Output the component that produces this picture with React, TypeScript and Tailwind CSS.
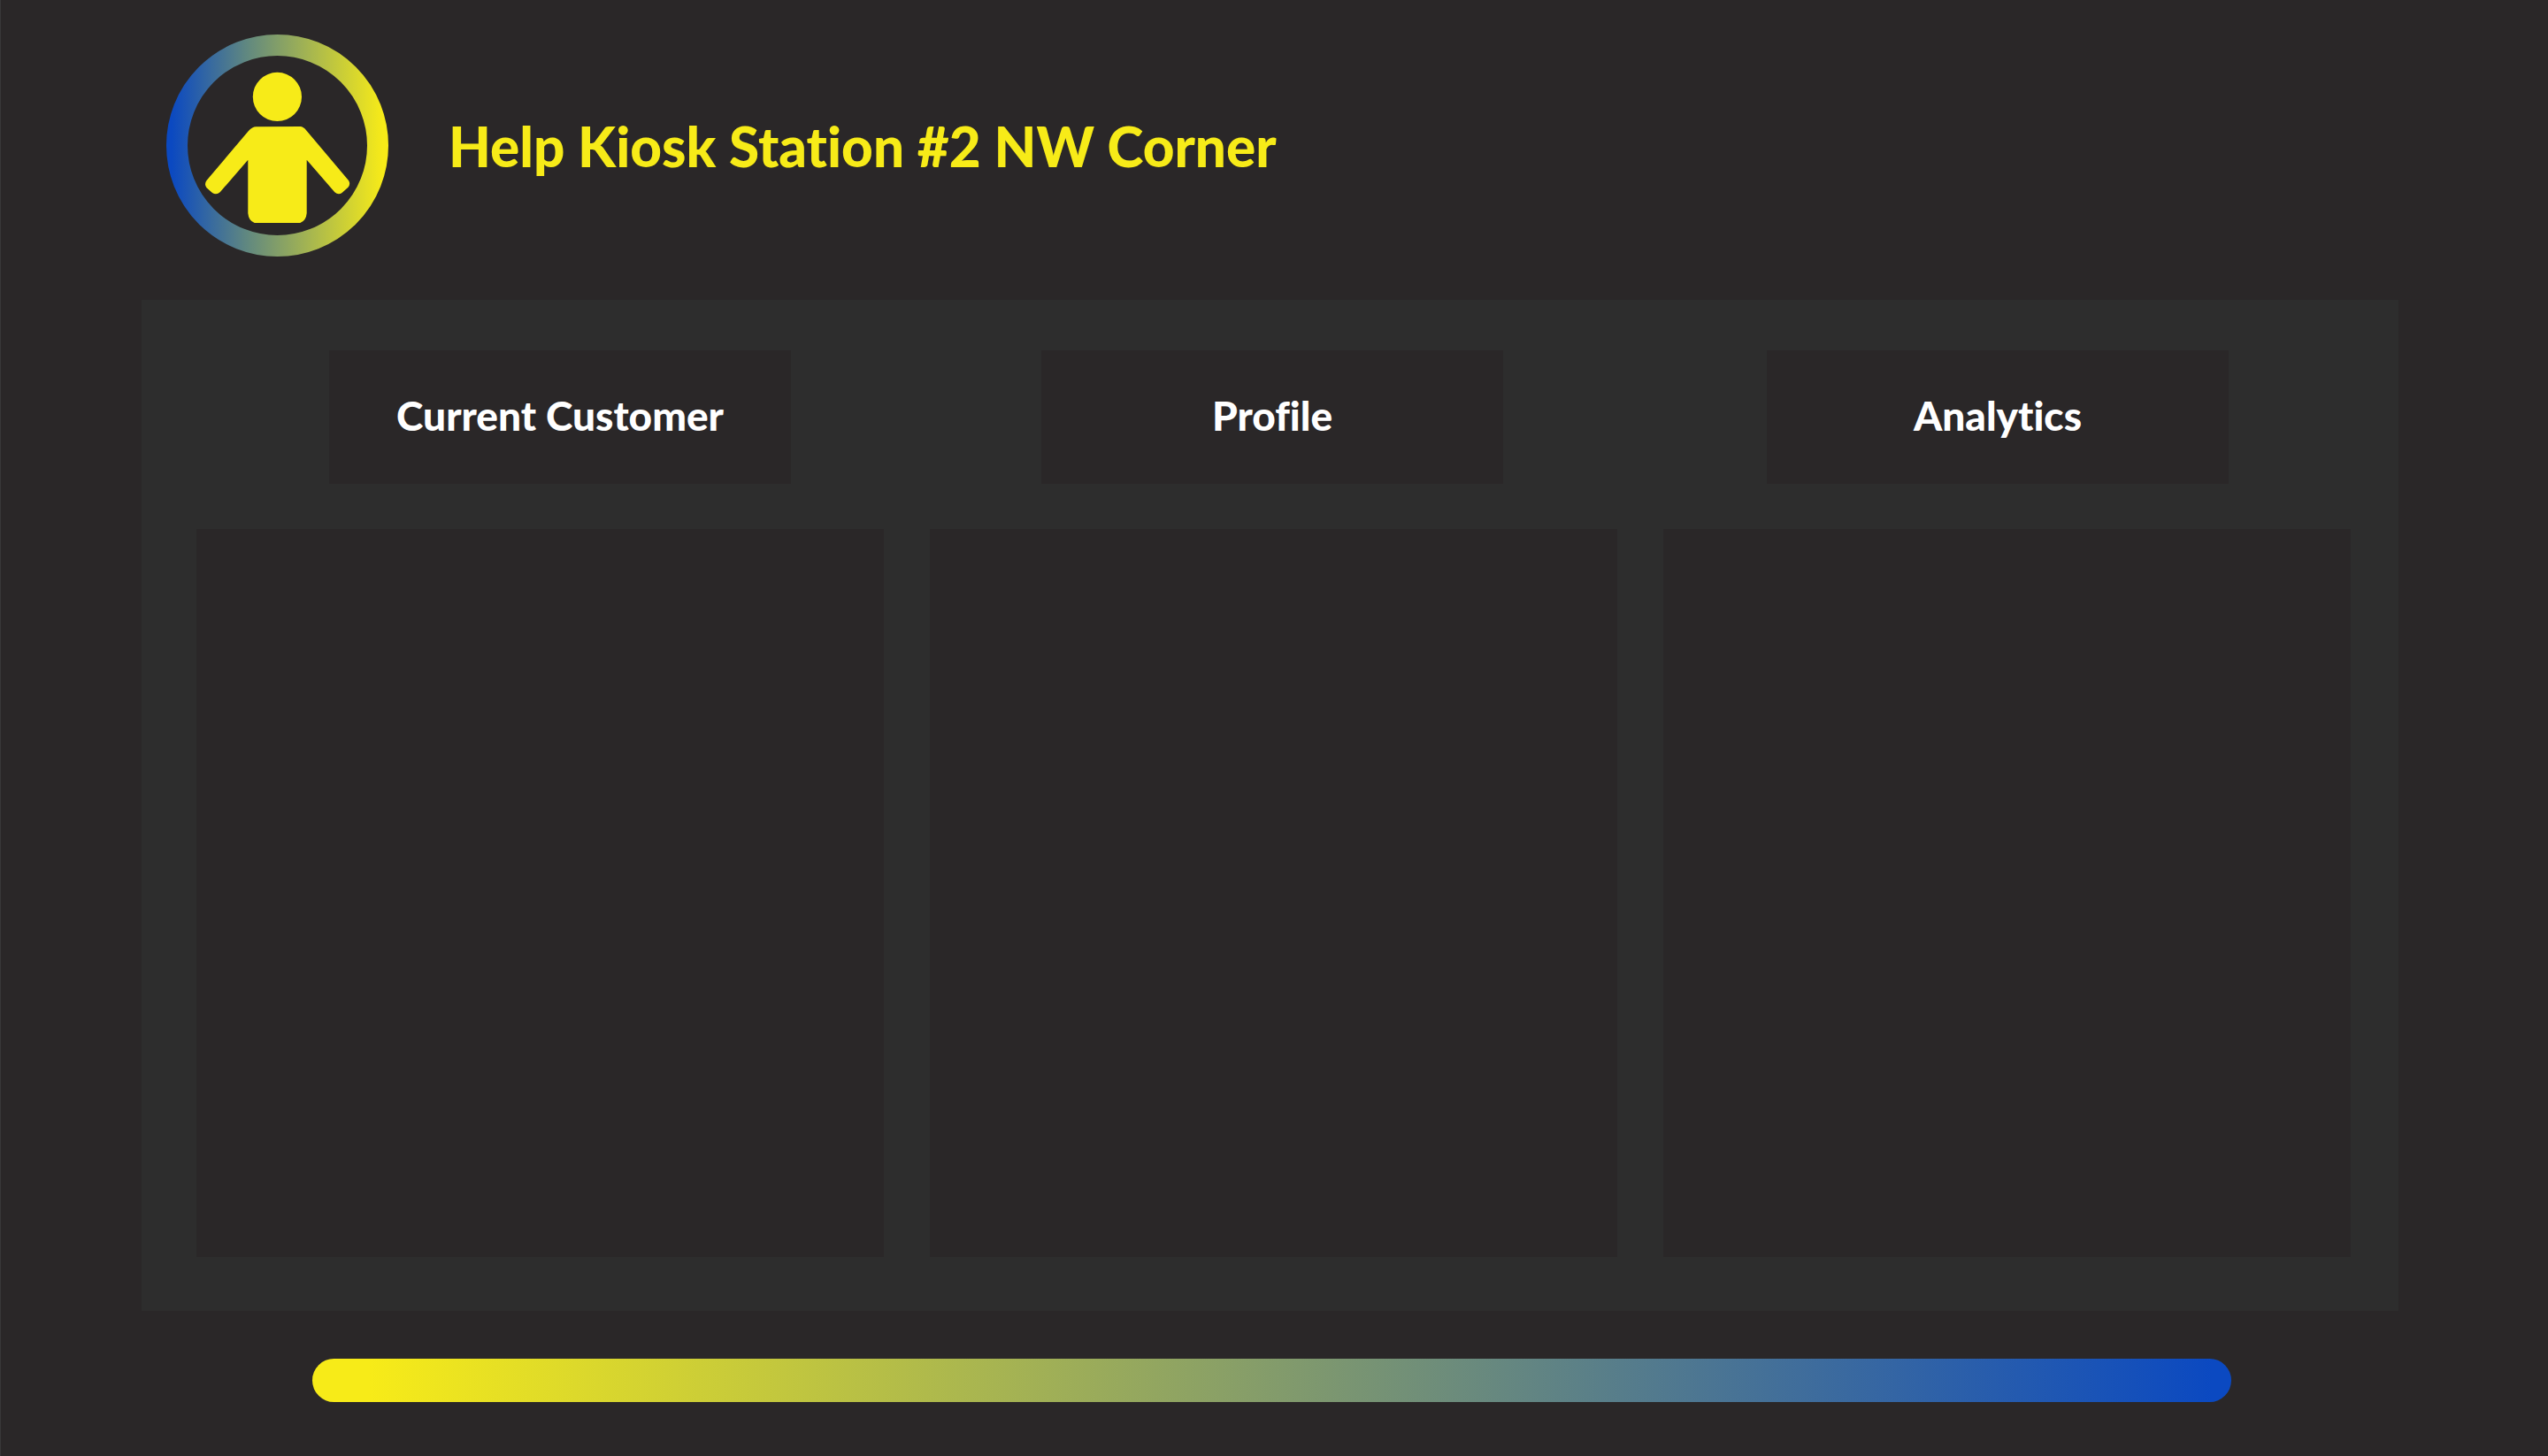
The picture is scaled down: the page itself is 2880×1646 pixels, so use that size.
const tabs = ["Current Customer", "Profile", "Analytics"];

function Logo() {
  return (
    <svg viewBox="0 0 251 251" className="size-[251px] shrink-0" aria-hidden="true">
      <defs>
        <linearGradient id="ring" gradientUnits="userSpaceOnUse" x1="6" y1="0" x2="245" y2="0">
          <stop offset="0" stopColor="#0b49c1" />
          <stop offset="0.35" stopColor="#5f8781" />
          <stop offset="1" stopColor="#f7eb18" />
        </linearGradient>
      </defs>
      <circle cx="125.5" cy="125.5" r="113.5" fill="none" stroke="url(#ring)" strokeWidth="24" />
      <circle cx="125.4" cy="70.4" r="27.6" fill="#f7eb18" />
      <path
        fill="#f7eb18"
        d="M101.3 104.2 L151.3 104 Q155 104 158.3 108.6 L206 165 Q208.600 169 205.500 172.700 L198.500 179 Q194.500 182 190.300 178.300 L158.700 141.700 V202 Q158 210.500 151.300 213 H99.700 Q93 210.500 92.300 202 V141.700 L60.700 178.300 Q56.500 182 52 179 L45.500 173.300 Q42.500 169.300 45.500 165 L92.700 109.300 Q97.300 104.200 101.300 104.200 Z"
      />
    </svg>
  );
}

function Tab({ label }: { label: string }) {
  return (
    <button
      type="button"
      className="h-[151px] w-[522px] bg-[#2a2728] pb-1 text-[46px] leading-[60px] font-black text-white"
    >
      {label}
    </button>
  );
}

export default function App() {
  return (
    <div className="flex min-h-screen flex-col border-l border-[#383838] bg-[#2a2728] font-['Lato',sans-serif] [font-variant-ligatures:none]">
      <header className="flex items-center gap-[68px] pt-[39px] pb-[49px] pl-[187px]">
        <Logo />
        <h1 className="text-[62px] leading-[80px] font-black text-[#f7eb18]">
          Help Kiosk Station #2 NW Corner
        </h1>
      </header>

      <main className="mr-[169px] ml-[159px] flex flex-1 flex-col bg-[#2d2d2d] pt-[57px] pb-[61px]">
        <nav className="flex pr-[192px] pl-[212px]" aria-label="Station views">
          <Tab label={tabs[0]} />
          <div className="grow-[283]" />
          <Tab label={tabs[1]} />
          <div className="grow-[298]" />
          <Tab label={tabs[2]} />
        </nav>
        <div className="mt-[51px] grid flex-1 grid-cols-3 gap-[52px] pr-[54px] pl-[62px]">
          {tabs.map((tab) => (
            <section key={tab} aria-label={tab} className="bg-[#2a2728]" />
          ))}
        </div>
      </main>

      <footer className="pt-[54px] pr-[358px] pb-[61px] pl-[352px]">
        <div className="h-[49px] rounded-full bg-linear-to-r/srgb from-[#f7eb18] from-3% to-[#0b49c1] to-99%" />
      </footer>
    </div>
  );
}
